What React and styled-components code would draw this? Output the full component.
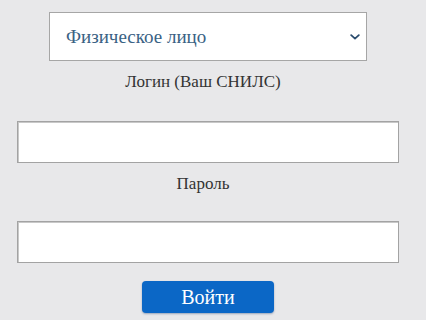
import React from "react";
import styled, { createGlobalStyle } from "styled-components";

const serifStack = `"Liberation Serif", "Times New Roman", serif`;

const Global = createGlobalStyle`
  html, body { margin: 0; padding: 0; background: #e8e8ea; }
`;

const Page = styled.div`
  width: 426px;
  height: 320px;
  background: #e8e8ea;
  overflow: hidden;
  padding-top: 12px;
  box-sizing: border-box;
  font-family: ${serifStack};
`;

const Form = styled.form`
  width: 382px;
  margin: 0 0 0 17px;
  display: flex;
  flex-direction: column;
  align-items: center;
`;

const SelectBox = styled.div`
  width: 318px;
  height: 49px;
  box-sizing: border-box;
  background: #fff;
  border: 1px solid #a6a6a6;
  display: flex;
  align-items: center;
  justify-content: space-between;
  padding: 0 6px 0 16px;
  font-family: ${serifStack};
  font-size: 19px;
  color: #3a6284;
`;

const Label = styled.div`
  font-family: ${serifStack};
  font-size: 17px;
  line-height: 20px;
  color: #333;
  margin-top: 11px;
  margin-bottom: ${(p) => p.$after}px;
  padding-right: 10px;
`;

const Input = styled.input`
  width: 382px;
  height: 42px;
  box-sizing: border-box;
  background: #fff;
  border: 1px solid #a3a3a3;
  box-shadow: inset 1px 1px 0 #c8c8c8;
  outline: none;
  margin: 0;
  padding: 0 8px;
  font-family: ${serifStack};
  font-size: 18px;
`;

const Button = styled.button`
  margin-top: ${(p) => p.$top}px;
  width: 132px;
  height: 32px;
  border: none;
  border-radius: 4px;
  background: #0b67c6;
  color: #fff;
  font-family: ${serifStack};
  font-size: 20px;
  line-height: 32px;
  padding: 0;
  box-shadow: 0 1px 2px rgba(0, 40, 100, 0.35);
`;

const Chevron = () => (
  <svg width="10" height="6" viewBox="0 0 10 6" fill="none">
    <path d="M1.2 1.2 L5 4.6 L8.8 1.2" stroke="#2b4d6e" strokeWidth="1.8" strokeLinecap="round" strokeLinejoin="round" />
  </svg>
);

export default function App() {
  return (
    <Page>
      <Global />
      <Form onSubmit={(e) => e.preventDefault()}>
        <SelectBox>
          <span>Физическое лицо</span>
          <Chevron />
        </SelectBox>
        <Label $after={29}>Логин (Ваш СНИЛС)</Label>
        <Input type="text" />
        <Label $after={27}>Пароль</Label>
        <Input type="password" />
        <Button type="submit" $top={18}>Войти</Button>
      </Form>
    </Page>
  );
}
